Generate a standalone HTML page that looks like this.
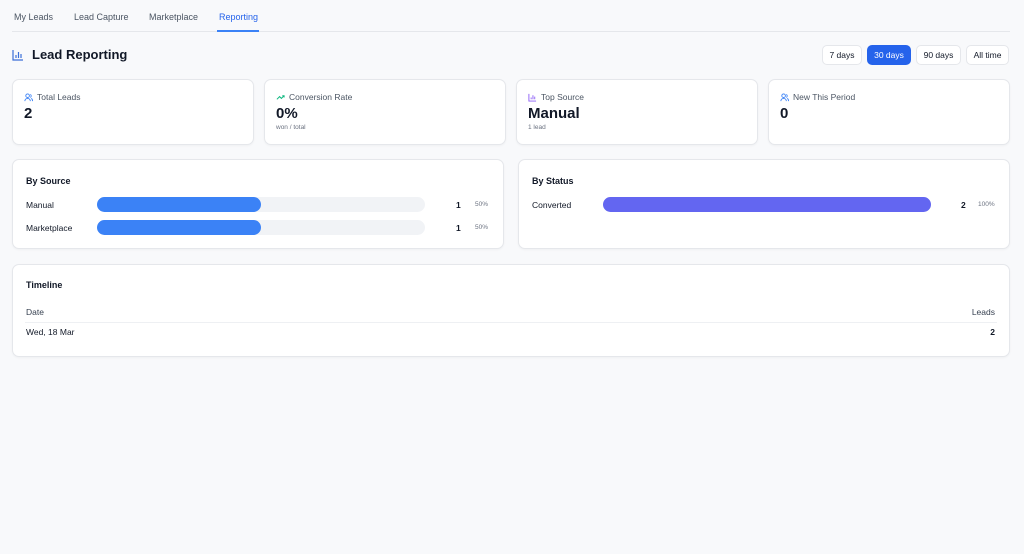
<!DOCTYPE html>
<html><head><style>
*{box-sizing:border-box;margin:0;padding:0}
body{width:1024px;height:554px;background:#f8f9fb;font-family:"Liberation Sans",sans-serif;color:#111827;position:relative;overflow:hidden}
.a{position:absolute}
.tab{position:absolute;top:12px;font-size:9px;color:#4b5563}
.card{position:absolute;background:#fff;border:1px solid #e5e7eb;border-radius:7px;box-shadow:0 1px 2px rgba(0,0,0,.04)}
.lbl{position:absolute;left:11px;top:12px;font-size:8.5px;color:#4b5563;display:flex;align-items:center;gap:4px}
.val{position:absolute;left:11px;top:25px;font-size:15px;font-weight:bold}
.sub{position:absolute;left:11px;top:44px;font-size:6.5px;color:#6b7280}
.btn{position:absolute;top:45px;height:20px;border:1px solid #e5e7eb;border-radius:5px;background:#fff;font-size:8.5px;display:flex;align-items:center;justify-content:center;color:#111827}
.h{position:absolute;left:13px;top:16px;font-size:9px;font-weight:bold}
.rl{position:absolute;left:13px;font-size:8.5px}
.bar{position:absolute;height:15px;border-radius:8px;background:#f1f3f6}
.bar i{display:block;height:100%;border-radius:8px}
.n{position:absolute;font-size:8.5px;font-weight:bold}
.p{position:absolute;font-size:6.5px;color:#6b7280}
</style></head><body>
<div class="tab" style="left:14px">My Leads</div>
<div class="tab" style="left:74px">Lead Capture</div>
<div class="tab" style="left:149px">Marketplace</div>
<div class="tab" style="left:219px;color:#2563eb">Reporting</div>
<div class="a" style="left:12px;top:31px;width:998px;height:1px;background:#e5e7eb"></div>
<div class="a" style="left:217px;top:30px;width:42px;height:2px;background:#3b82f6"></div>

<svg class="a" style="left:12px;top:49px" width="12" height="12" viewBox="0 0 12 12" fill="none" stroke="#3b6fd8" stroke-width="1.2"><path d="M1 1v10h10M4 9V6M6.5 9V3M9 9V5"/></svg>
<div class="a" style="left:32px;top:47px;font-size:13px;font-weight:bold">Lead Reporting</div>

<div class="btn" style="left:822px;width:40px">7 days</div>
<div class="btn" style="left:867px;width:44px;background:#2563eb;border-color:#2563eb;color:#fff">30 days</div>
<div class="btn" style="left:916px;width:45px">90 days</div>
<div class="btn" style="left:966px;width:43px">All time</div>

<div class="card" style="left:12px;top:79px;width:242px;height:66px"><div class="lbl"><svg width="9" height="9" viewBox="0 0 10 10" fill="none" stroke="#3b82f6" stroke-width="1"><circle cx="4" cy="3" r="2"/><path d="M1 9c0-2 1.5-3 3-3s3 1 3 3M7 1.5a2 2 0 010 3.5M8 6c1 .5 1.5 1.5 1.5 3"/></svg>Total Leads</div><div class="val">2</div></div>
<div class="card" style="left:264px;top:79px;width:242px;height:66px"><div class="lbl"><svg width="9" height="9" viewBox="0 0 10 10" fill="none" stroke="#10b981" stroke-width="1.1"><path d="M1 7l3-3 2 2 3-3M7 3h2v2"/></svg>Conversion Rate</div><div class="val">0%</div><div class="sub">won / total</div></div>
<div class="card" style="left:516px;top:79px;width:242px;height:66px"><div class="lbl"><svg width="9" height="9" viewBox="0 0 10 10" fill="none" stroke="#8b5cf6" stroke-width="1"><path d="M1 1v8h8M3.5 7V5M5.5 7V2.5M7.5 7V4"/></svg>Top Source</div><div class="val">Manual</div><div class="sub">1 lead</div></div>
<div class="card" style="left:768px;top:79px;width:242px;height:66px"><div class="lbl"><svg width="9" height="9" viewBox="0 0 10 10" fill="none" stroke="#3b82f6" stroke-width="1"><circle cx="4" cy="3" r="2"/><path d="M1 9c0-2 1.5-3 3-3s3 1 3 3M7 1.5a2 2 0 010 3.5M8 6c1 .5 1.5 1.5 1.5 3"/></svg>New This Period</div><div class="val">0</div></div>

<div class="card" style="left:12px;top:159px;width:492px;height:90px">
<div class="h">By Source</div>
<div class="rl" style="top:40px">Manual</div>
<div class="bar" style="left:84px;top:37px;width:328px"><i style="width:50%;background:#3b82f6"></i></div>
<div class="n" style="left:443px;top:40px">1</div><div class="p" style="left:462px;top:41px">50%</div>
<div class="rl" style="top:63px">Marketplace</div>
<div class="bar" style="left:84px;top:60px;width:328px"><i style="width:50%;background:#3b82f6"></i></div>
<div class="n" style="left:443px;top:63px">1</div><div class="p" style="left:462px;top:64px">50%</div>
</div>
<div class="card" style="left:518px;top:159px;width:492px;height:90px">
<div class="h">By Status</div>
<div class="rl" style="top:40px">Converted</div>
<div class="bar" style="left:84px;top:37px;width:328px"><i style="width:100%;background:#6366f1"></i></div>
<div class="n" style="left:442px;top:40px">2</div><div class="p" style="left:459px;top:41px">100%</div>
</div>

<div class="card" style="left:12px;top:264px;width:998px;height:93px">
<div class="h" style="top:15px">Timeline</div>
<div class="a" style="left:13px;top:42px;font-size:8.5px;color:#374151">Date</div>
<div class="a" style="right:14px;top:42px;font-size:8.5px;color:#374151">Leads</div>
<div class="a" style="left:12px;right:12px;top:57px;height:1px;background:#eef0f3"></div>
<div class="a" style="left:13px;top:62px;font-size:8.5px">Wed, 18 Mar</div>
<div class="a" style="right:14px;top:62px;font-size:8.5px;font-weight:bold">2</div>
</div>
</body></html>
